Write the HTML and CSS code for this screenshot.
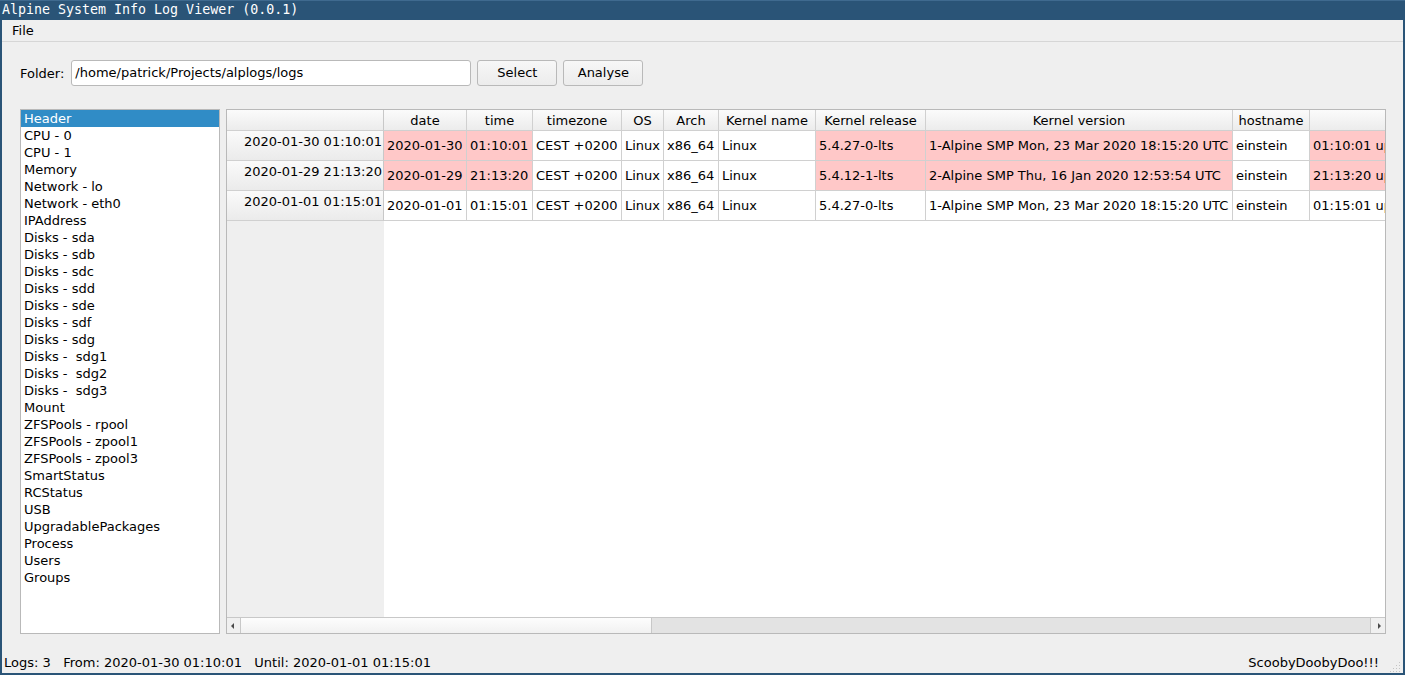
FILE: index.html
```html
<!DOCTYPE html>
<html>
<head>
<meta charset="utf-8">
<title>Alpine System Info Log Viewer</title>
<link rel="stylesheet" href="styles.css">
</head>
<body>
<div class="window">
  <div class="titlebar">Alpine System Info Log Viewer (0.0.1)</div>
  <div class="frame">
    <div class="menubar"><span class="menu-item">File</span></div>
    <div class="toolbar">
      <span class="label">Folder:</span>
      <div class="input">/home/patrick/Projects/alplogs/logs</div>
      <div class="button">Select</div>
      <div class="button">Analyse</div>
    </div>
    <div class="main">
      <div class="list">
        <div class="item selected">Header</div>
        <div class="item">CPU - 0</div>
        <div class="item">CPU - 1</div>
        <div class="item">Memory</div>
        <div class="item">Network - lo</div>
        <div class="item">Network - eth0</div>
        <div class="item">IPAddress</div>
        <div class="item">Disks - sda</div>
        <div class="item">Disks - sdb</div>
        <div class="item">Disks - sdc</div>
        <div class="item">Disks - sdd</div>
        <div class="item">Disks - sde</div>
        <div class="item">Disks - sdf</div>
        <div class="item">Disks - sdg</div>
        <div class="item">Disks - &nbsp;sdg1</div>
        <div class="item">Disks - &nbsp;sdg2</div>
        <div class="item">Disks - &nbsp;sdg3</div>
        <div class="item">Mount</div>
        <div class="item">ZFSPools - rpool</div>
        <div class="item">ZFSPools - zpool1</div>
        <div class="item">ZFSPools - zpool3</div>
        <div class="item">SmartStatus</div>
        <div class="item">RCStatus</div>
        <div class="item">USB</div>
        <div class="item">UpgradablePackages</div>
        <div class="item">Process</div>
        <div class="item">Users</div>
        <div class="item">Groups</div>
      </div>
      <div class="tableview">
        <div class="viewport">
          <div class="grid">
            <div class="hcell corner"></div>
            <div class="hcell">date</div>
            <div class="hcell">time</div>
            <div class="hcell">timezone</div>
            <div class="hcell">OS</div>
            <div class="hcell">Arch</div>
            <div class="hcell">Kernel name</div>
            <div class="hcell">Kernel release</div>
            <div class="hcell">Kernel version</div>
            <div class="hcell">hostname</div>
            <div class="hcell"></div>

            <div class="vcell">2020-01-30 01:10:01</div>
            <div class="cell diff">2020-01-30</div>
            <div class="cell diff">01:10:01</div>
            <div class="cell">CEST +0200</div>
            <div class="cell">Linux</div>
            <div class="cell">x86_64</div>
            <div class="cell">Linux</div>
            <div class="cell diff">5.4.27-0-lts</div>
            <div class="cell diff">1-Alpine SMP Mon, 23 Mar 2020 18:15:20 UTC</div>
            <div class="cell">einstein</div>
            <div class="cell diff">01:10:01 up 3 days</div>

            <div class="vcell">2020-01-29 21:13:20</div>
            <div class="cell diff">2020-01-29</div>
            <div class="cell diff">21:13:20</div>
            <div class="cell">CEST +0200</div>
            <div class="cell">Linux</div>
            <div class="cell">x86_64</div>
            <div class="cell">Linux</div>
            <div class="cell diff">5.4.12-1-lts</div>
            <div class="cell diff">2-Alpine SMP Thu, 16 Jan 2020 12:53:54 UTC</div>
            <div class="cell">einstein</div>
            <div class="cell diff">21:13:20 up 5 days</div>

            <div class="vcell">2020-01-01 01:15:01</div>
            <div class="cell">2020-01-01</div>
            <div class="cell">01:15:01</div>
            <div class="cell">CEST +0200</div>
            <div class="cell">Linux</div>
            <div class="cell">x86_64</div>
            <div class="cell">Linux</div>
            <div class="cell">5.4.27-0-lts</div>
            <div class="cell">1-Alpine SMP Mon, 23 Mar 2020 18:15:20 UTC</div>
            <div class="cell">einstein</div>
            <div class="cell">01:15:01 up 1 day</div>
          </div>
        </div>
        <div class="hscroll">
          <div class="sbtn"><svg width="13" height="14" viewBox="0 0 13 14"><path d="M4 7 L7 4 L7 10 Z" fill="#4a4a4a"/></svg></div>
          <div class="handle"></div>
          <div class="track"></div>
          <div class="sbtn right"><svg width="13" height="14" viewBox="0 0 13 14"><path d="M9 7 L6 4 L6 10 Z" fill="#4a4a4a"/></svg></div>
        </div>
      </div>
    </div>
    <div class="statusbar">
      <span class="status-left">Logs: 3 &nbsp; From: 2020-01-30 01:10:01 &nbsp; Until: 2020-01-01 01:15:01</span>
      <span class="status-right">ScoobyDoobyDoo!!!</span>
      <svg class="grip" width="12" height="12" viewBox="0 0 12 12">
        <g fill="#c4c4c4">
          <rect x="10" y="2" width="1" height="1"/>
          <rect x="7" y="5" width="1" height="1"/><rect x="10" y="5" width="1" height="1"/>
          <rect x="4" y="8" width="1" height="1"/><rect x="7" y="8" width="1" height="1"/><rect x="10" y="8" width="1" height="1"/>
          <rect x="1" y="11" width="1" height="1"/><rect x="4" y="11" width="1" height="1"/><rect x="7" y="11" width="1" height="1"/><rect x="10" y="11" width="1" height="1"/>
        </g>
      </svg>
    </div>
  </div>
</div>
</body>
</html>
```

FILE: styles.css
```css
* { box-sizing: border-box; }
html, body { margin: 0; padding: 0; }
body {
  width: 1405px;
  height: 675px;
  overflow: hidden;
  font-family: "DejaVu Sans", sans-serif;
  font-size: 13px;
  color: #000;
  background: #2a5477;
}
.window {
  width: 1405px;
  height: 675px;
  display: flex;
  flex-direction: column;
}
.titlebar {
  height: 20px;
  padding-left: 2px;
  background: #2a5477;
  color: #ffffff;
  font-family: "DejaVu Sans Mono", monospace;
  font-size: 13.3px;
  white-space: nowrap;
  border-top: 1px solid #3f6a8f;
  line-height: 18px;
}
.frame {
  flex: 1;
  margin: 0 2px 2px 2px;
  background: #efefef;
  display: flex;
  flex-direction: column;
  min-height: 0;
}
.menubar {
  height: 22px;
  border-bottom: 1px solid #d6d6d6;
  display: flex;
  align-items: center;
  padding-left: 10px;
}
.menu-item { line-height: 17px; padding-bottom: 1px; }
.toolbar {
  display: flex;
  align-items: center;
  padding: 18px 0 0 18px;
  height: 44px;
}
.label { margin-right: 7px; }
.input {
  width: 400px;
  height: 26px;
  background: #fff;
  border: 1px solid #b9b9b9;
  border-radius: 3px;
  padding-left: 3px;
  line-height: 24px;
  margin-right: 6px;
}
.button {
  width: 80px;
  height: 26px;
  border: 1px solid #b9b9b9;
  border-radius: 3px;
  background: linear-gradient(#f7f7f7, #ececec);
  text-align: center;
  line-height: 24px;
  margin-right: 6px;
}
.main {
  display: flex;
  gap: 6px;
  padding: 0 17px 0 18px;
  margin-top: 23px;
  height: 525px;
}
.list {
  width: 200px;
  height: 525px;
  background: #fff;
  border: 1px solid #b9b9b9;
  overflow: hidden;
}
.item {
  height: 17px;
  line-height: 17px;
  padding-left: 3px;
  white-space: nowrap;
}
.item.selected {
  background: #308cc6;
  color: #fff;
}
.tableview {
  flex: 1;
  height: 525px;
  border: 1px solid #b9b9b9;
  display: flex;
  flex-direction: column;
  overflow: hidden;
}
.viewport {
  flex: 1;
  overflow: hidden;
  background: linear-gradient(to right, #efefef 157px, #ffffff 157px);
  border-bottom: 1px solid #c8c8c8;
}
.grid {
  display: grid;
  grid-template-columns: 157px 83px 66px 89px 42px 55px 97px 110px 307px 77px 200px;
  grid-template-rows: 21px 30px 30px 30px;
  width: 1333px;
  white-space: nowrap;
}
.hcell {
  background: linear-gradient(#fbfbfb, #ececec);
  border-right: 1px solid #d0d0d0;
  border-bottom: 1px solid #d0d0d0;
  text-align: center;
  padding-top: 1px;
  line-height: 19px;
  overflow: hidden;
}
.hcell.corner { border-right-color: #c8c8c8; }
.vcell {
  background: linear-gradient(#fafafa, #ebebeb);
  border-right: 1px solid #c8c8c8;
  border-bottom: 1px solid #d0d0d0;
  text-align: right;
  padding-right: 1px;
  padding-top: 3px;
  line-height: 16px;
}
.cell {
  background: #fff;
  border-right: 1px solid #d0d0d0;
  border-bottom: 1px solid #d0d0d0;
  padding-left: 3px;
  line-height: 29px;
  overflow: hidden;
}
.cell.diff { background: #ffc8c8; }
.hscroll {
  height: 15px;
  display: flex;
  background: #e3e3e3;
}
.sbtn {
  width: 14px;
  height: 15px;
  background: #f0f0f0;
  border-right: 1px solid #c8c8c8;
  display: flex;
  align-items: center;
  justify-content: center;
}
.sbtn.right {
  border-right: none;
  border-left: 1px solid #c8c8c8;
  width: 15px;
}
.handle {
  width: 411px;
  background: linear-gradient(#fdfdfd, #f1f1f1);
  border-right: 1px solid #c8c8c8;
}
.track { flex: 1; }
.statusbar {
  flex: 1;
  display: flex;
  align-items: flex-end;
  padding: 0 2px 2px 2px;
  position: relative;
}
.status-left { white-space: pre; line-height: 17px; }
.status-right { margin-left: auto; margin-right: 22px; line-height: 17px; }
.grip { position: absolute; right: 2px; bottom: 1px; }
```
